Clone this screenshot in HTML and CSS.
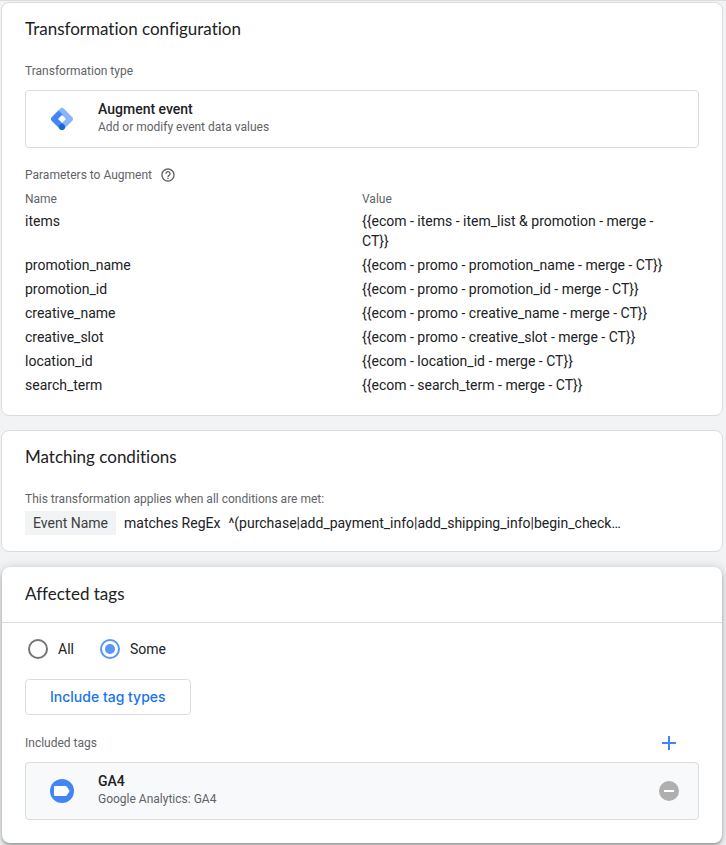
FILE: index.html
```html
<!DOCTYPE html>
<html lang="en">
<head>
<meta charset="utf-8">
<title>Transformation configuration</title>
<link rel="stylesheet" href="styles.css">
</head>
<body>
<main class="page">
  <section class="card config">
    <h2 class="card-title">Transformation configuration</h2>
    <p class="label type-label">Transformation type</p>
    <button type="button" class="item">
      <svg class="item-icon" width="24" height="24" viewBox="0 0 24 24" aria-hidden="true">
        <path fill="#8ab4f8" d="M9.900 1.900a3 3 0 0 1 4.200 0l8 8a3 3 0 0 1 0 4.200l-8 8a3 3 0 0 1-4.200 0L6 12l4-5-1.200-2a3 3 0 0 1 1.100-3.100z"/>
        <path fill="#4285f4" d="M8.900 2.900 1.900 9.900a3 3 0 0 0 0 4.200l8 8a3 3 0 0 0 4.200-4.200L10 12l3-4.100-3.100-3.100a3 3 0 0 1-1-1.900z"/>
        <path fill="#fff" d="m12 8 4 4-4 4-4-4z"/>
        <circle fill="#1967d2" cx="12" cy="20" r="3"/>
      </svg>
      <span class="item-text">
        <span class="item-name">Augment event</span>
        <span class="label">Add or modify event data values</span>
      </span>
    </button>
    <div class="params-head">
      <span class="label" id="params-label">Parameters to Augment</span>
      <button type="button" class="icon-button" aria-label="Help">
        <svg width="16" height="16" viewBox="0 0 24 24" aria-hidden="true"><path fill="#5f6368" d="M11 18h2v-2h-2v2zm1-16C6.480 2 2 6.480 2 12s4.480 10 10 10 10-4.480 10-10S17.520 2 12 2zm0 18c-4.410 0-8-3.590-8-8s3.590-8 8-8 8 3.590 8 8-3.590 8-8 8zm0-14c-2.210 0-4 1.790-4 4h2c0-1.100.9-2 2-2s2 .9 2 2c0 2-3 1.750-3 5h2c0-2.250 3-2.500 3-5 0-2.210-1.790-4-4-4z"/></svg>
      </button>
    </div>
    <table class="params" aria-labelledby="params-label">
      <thead><tr><th>Name</th><th>Value</th></tr></thead>
      <tbody>
        <tr><td>items</td><td>{{ecom - items - item_list &amp; promotion - merge - CT}}</td></tr>
        <tr><td>promotion_name</td><td>{{ecom - promo - promotion_name - merge - CT}}</td></tr>
        <tr><td>promotion_id</td><td>{{ecom - promo - promotion_id - merge - CT}}</td></tr>
        <tr><td>creative_name</td><td>{{ecom - promo - creative_name - merge - CT}}</td></tr>
        <tr><td>creative_slot</td><td>{{ecom - promo - creative_slot - merge - CT}}</td></tr>
        <tr><td>location_id</td><td>{{ecom - location_id - merge - CT}}</td></tr>
        <tr><td>search_term</td><td>{{ecom - search_term - merge - CT}}</td></tr>
      </tbody>
    </table>
  </section>

  <section class="card">
    <h2 class="card-title">Matching conditions</h2>
    <p class="label">This transformation applies when all conditions are met:</p>
    <div class="condition">
      <span class="chip">Event Name</span>
      <span>matches RegEx</span>
      <span>^(purchase|add_payment_info|add_shipping_info|begin_check…</span>
    </div>
  </section>

  <section class="card raised">
    <h2 class="card-title ruled">Affected tags</h2>
    <div class="tags">
      <div class="radios">
        <label class="radio"><input type="radio" name="scope">All</label>
        <label class="radio"><input type="radio" name="scope" checked>Some</label>
      </div>
      <button type="button" class="outlined">Include tag types</button>
      <div class="tags-head">
        <span class="label">Included tags</span>
        <button type="button" class="icon-button" aria-label="Add tag">
          <svg width="24" height="24" viewBox="0 0 24 24" aria-hidden="true"><path fill="#4285f4" d="M19 13h-6v6h-2v-6H5v-2h6V5h2v6h6z"/></svg>
        </button>
      </div>
      <div class="item filled">
        <svg class="item-icon" width="24" height="24" viewBox="0 0 24 24" aria-hidden="true">
          <circle fill="#4285f4" cx="12" cy="12" r="12"/>
          <path fill="#fff" d="M5 7h10.500a1.500 1.500 0 0 1 1.200.6l2.500 3.600a1.400 1.400 0 0 1 0 1.600l-2.500 3.600a1.500 1.500 0 0 1-1.200.6H5a1 1 0 0 1-1-1V8a1 1 0 0 1 1-1z"/>
        </svg>
        <span class="item-text">
          <span class="item-name">GA4</span>
          <span class="label">Google Analytics: GA4</span>
        </span>
        <button type="button" class="icon-button" aria-label="Remove GA4">
          <svg width="24" height="24" viewBox="0 0 24 24" aria-hidden="true"><circle fill="#afafaf" cx="12" cy="12" r="10"/><path fill="#fff" d="M7 11h10v2H7z"/></svg>
        </button>
      </div>
    </div>
  </section>
</main>
</body>
</html>
```
FILE: styles.css
```css
* {
  box-sizing: border-box;
}

body {
  margin: 0;
  background: #f1f3f4;
  color: #202124;
  font: 14px/20px Roboto, "Liberation Sans", sans-serif;
}

h2,
p {
  margin: 0;
}

button {
  font: inherit;
  color: inherit;
  text-align: left;
  cursor: pointer;
}

.page {
  display: flex;
  flex-direction: column;
  gap: 14px;
  padding: 1px 3px 2px 1px;
  border-top: 1px solid #dadce0;
}

.card {
  padding: 14px 23px 16px;
  background: #fff;
  border: 1px solid #dadce0;
  border-radius: 8px;
}

.card.config {
  padding-bottom: 18px;
}

.card-title {
  margin-bottom: 20px;
  font: 400 17px/24px Lato, Roboto, sans-serif;
  font-variant-ligatures: none;
}

.label {
  color: #5f6368;
  font-size: 12px;
}

.type-label {
  margin-bottom: 9px;
}

.item {
  display: flex;
  align-items: center;
  gap: 24px;
  width: 100%;
  padding: 8px 17px 8px 24px;
  background: #fff;
  border: 1px solid #dadce0;
  border-radius: 4px;
}

.item.filled {
  background: #f8f9fa;
}

.item-icon {
  flex: none;
}

.item-text {
  display: flex;
  flex: 1;
  flex-direction: column;
  padding-bottom: 4px;
}

.item-text .label {
  line-height: 16px;
}

.item-name {
  font-weight: 500;
}

.icon-button {
  display: flex;
  padding: 0;
  background: none;
  border: 0;
}

.params-head {
  display: flex;
  align-items: center;
  gap: 8px;
  margin: 17px 0 4px;
}

.params {
  width: 100%;
  table-layout: fixed;
  border-collapse: collapse;
}

.params th {
  padding: 0;
  color: #5f6368;
  font-size: 12px;
  font-weight: 400;
  text-align: left;
}

.params td {
  padding: 2px 24px 2px 0;
  vertical-align: top;
}

.condition {
  display: flex;
  flex-wrap: wrap;
  align-items: center;
  gap: 8px;
  margin-top: 2px;
}

.chip {
  padding: 2px 8px;
  background: #f1f3f4;
  color: #3c4043;
}

.card.raised {
  margin: 1px 1px 0;
  padding: 0;
  border: 0;
  box-shadow: 0 2px 3px rgba(0, 0, 0, 0.26), 0 2px 12px rgba(0, 0, 0, 0.22);
}

.card-title.ruled {
  margin: 0;
  padding: 15px 23px 16px;
  border-bottom: 1px solid #dadce0;
}

.tags {
  padding: 16px 23px 23px;
}

.radios {
  display: flex;
  gap: 26px;
  padding-left: 3px;
}

.radio {
  display: flex;
  align-items: center;
  gap: 10px;
}

.radio input {
  display: grid;
  place-items: center;
  width: 20px;
  height: 20px;
  margin: 0;
  appearance: none;
  border: 2px solid #757575;
  border-radius: 50%;
}

.radio input:checked {
  border-color: #5b95f9;
}

.radio input:checked::before {
  width: 10px;
  height: 10px;
  background: #5b95f9;
  border-radius: 50%;
  content: "";
}

.outlined {
  height: 36px;
  margin: 20px 0 16px;
  padding: 0 24px;
  background: #fff;
  border: 1px solid #dadce0;
  border-radius: 4px;
  color: #1a73e8;
  font: 500 14px/20px Inter, Roboto, sans-serif;
}

.tags-head {
  display: flex;
  align-items: center;
  justify-content: space-between;
  margin-bottom: 7px;
  padding-right: 18px;
}
```
